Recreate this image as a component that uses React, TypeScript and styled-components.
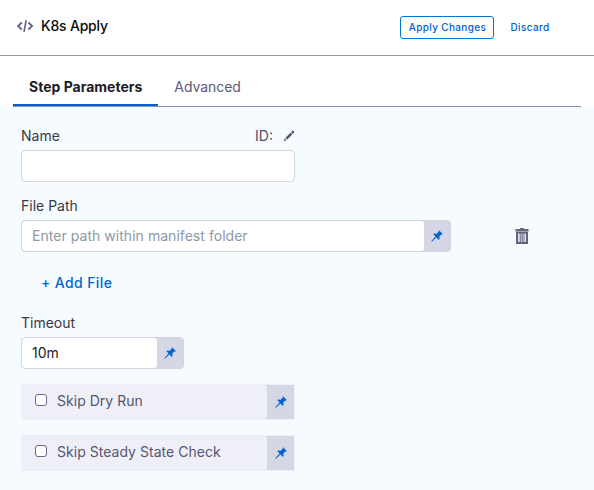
import React from "react";
import styled, { createGlobalStyle } from "styled-components";

const GlobalStyle = createGlobalStyle`
  *, *::before, *::after { box-sizing: border-box; }
  body {
    margin: 0;
    background: #f6fbff;
    font-family: Inter, "Liberation Sans", sans-serif;
    font-size: 14px;
    color: #383946;
  }
  button, input { font: inherit; }
`;

const Panel = styled.div`
  width: 594px;
  height: 490px;
  overflow: hidden;
  background: #f6fbff;
`;

const Header = styled.header`
  display: flex;
  align-items: center;
  height: 56px;
  padding: 0 36px 0 17px;
  background: #fff;
  border-bottom: 1px solid #9293ab;
`;

const Title = styled.h1`
  flex: 1;
  margin: 0 0 3px 7px;
  font-size: 14px;
  line-height: 20px;
  font-weight: 450;
  letter-spacing: -0.2px;
  color: #0b0b0d;
`;

const CodeSvg = styled.svg`
  margin-bottom: 4px;
`;

const HeaderButton = styled.button<{ $outlined?: boolean }>`
  width: ${(p) => (p.$outlined ? 94 : 57)}px;
  height: 23px;
  padding: 0 0 0 1px;
  border: 1px solid ${(p) => (p.$outlined ? "#0278d5" : "transparent")};
  border-radius: 3px;
  background: #fff;
  color: #0061cd;
  font-size: 10px;
  font-weight: 500;
  letter-spacing: 0.35px;
  white-space: nowrap;
`;

const HeaderActions = styled.div`
  display: flex;
  gap: 7px;
  margin-bottom: 1px;
`;

const TabsBar = styled.div`
  height: 51px;
  padding: 10px 13px 0;
  background: #fff;
`;

const TabList = styled.div`
  display: flex;
  height: 41px;
  border-bottom: 1px solid #9293ab;
`;

const Tab = styled.div<{ $active?: boolean }>`
  height: 40px;
  padding: 0 16px;
  line-height: 42px;
  white-space: nowrap;
  font-weight: ${(p) => (p.$active ? 700 : 400)};
  color: ${(p) => (p.$active ? "#1c1c28" : "#5b5a78")};
  letter-spacing: ${(p) => (p.$active ? "0" : "-0.05px")};
  border-bottom: 2px solid ${(p) => (p.$active ? "#0a5fc8" : "transparent")};
`;

const Form = styled.form`
  display: flex;
  flex-direction: column;
  padding: 19px 21px 0;
`;

const Field = styled.div<{ $width: number; $gap?: number }>`
  width: ${(p) => p.$width}px;
  margin-bottom: ${(p) => p.$gap ?? 0}px;
`;

const LabelRow = styled.div`
  display: flex;
  align-items: center;
  height: 20px;
  margin-bottom: 4px;
  line-height: 20px;
`;

const Label = styled.label`
  flex: 1;
`;

const Identifier = styled.span`
  margin-right: 10px;
  color: #4f5162;
`;

const InputGroup = styled.div`
  display: flex;
  height: 32px;
  border: 1px solid #d3d5e2;
  border-radius: 4px;
  background: #d5d7e4;
  overflow: hidden;
`;

const TextInput = styled.input`
  flex: 1;
  min-width: 0;
  padding: 0 10px 2px;
  border: 0;
  border-radius: 3px;
  outline: 0;
  background: #fff;
  color: #1c1c28;
  letter-spacing: 0.04px;
  &::placeholder { color: #8a9aa6; opacity: 1; }
`;

const PinCell = styled.span<{ $wide?: boolean }>`
  display: flex;
  align-items: center;
  justify-content: center;
  width: ${(p) => (p.$wide ? 27 : 26)}px;
`;

const FileRow = styled.div`
  display: flex;
  align-items: flex-end;
  gap: 64px;
`;

const TrashSvg = styled.svg`
  margin-bottom: 8px;
`;

const AddButton = styled.button`
  align-self: flex-start;
  height: 20px;
  margin: 21px 0 20px 20px;
  padding: 0;
  border: 0;
  background: none;
  color: #0066d0;
  font-weight: 480;
  letter-spacing: 0.38px;
  line-height: 20px;
`;

const CheckRow = styled.div`
  display: flex;
  width: 274px;
  height: 36px;
  margin-bottom: 15px;
  border: 1px solid #efeff8;
  background: #d5d7e4;
`;

const CheckLabel = styled.label`
  display: flex;
  flex: 1;
  align-items: center;
  gap: 10px;
  padding: 0 0 3px 13px;
  border-radius: 0 3px 3px 0;
  background: #efeff8;
  color: #555670;
  letter-spacing: 0.03px;
`;

const CheckBox = styled.input`
  appearance: none;
  width: 12px;
  height: 12px;
  margin: 0 0 1px;
  border: 1px solid #66668a;
  border-radius: 3px;
  background: #fff;
`;

const PinIcon = () => (
  <svg width="12" height="12" viewBox="0 0 12 12" fill="#0563d2">
    <path d="M8 .2 11.8 4c-.4.6-1 .6-1.6.4L8.2 6.8c.6 1.2.4 2.4-.3 3.1L5.4 7.4.9 11.8.2 11.2 4.6 6.6 2.1 4.1c.8-.7 2.1-.8 3.2-.2l2.4-2.1C7.4 1.2 7.5.6 8 .2z" />
  </svg>
);

const CodeIcon = () => (
  <CodeSvg width="17" height="14" viewBox="0 0 17 14" fill="none" stroke="#66668a" strokeWidth="2">
    <path d="M4.8 3.4 1.2 7l3.6 3.6M11.4 3.4 15 7l-3.6 3.6" />
    <path d="M9.2 1.2 7 12.8" strokeWidth="1.7" />
  </CodeSvg>
);

const PencilIcon = () => (
  <svg width="12" height="12" viewBox="0 0 16 16" fill="#55566f">
    <path d="M3.25 10.26l2.47 2.47 6.69-6.69-2.46-2.48-6.7 6.7zM.99 14.99l3.86-1.39-2.46-2.44L.99 14.99zm12.25-14c-.48 0-.92.2-1.24.51l-1.44 1.44 2.47 2.47 1.44-1.44c.32-.32.51-.75.51-1.24.01-.95-.77-1.74-1.74-1.74z" />
  </svg>
);

const TrashIcon = () => (
  <TrashSvg width="14" height="16" viewBox="0 0 14 16">
    <path d="M5 0h4v1h4.5v2H.5V1H5z" fill="#68687f" />
    <path d="M.5 3h13v1H.5z" fill="#9fa0b2" />
    <path d="M1 4h12v12H1z" fill="#626279" />
    <path d="M3 5.5h1.7V14H3zM5.7 5.5h.9V14h-.9zM7.6 5.5h.9V14h-.9zM9.4 5.5H11V14H9.4z" fill="#e4e8f2" />
  </TrashSvg>
);

const checks = ["Skip Dry Run", "Skip Steady State Check"];

export default function App() {
  return (
    <Panel>
      <GlobalStyle />
      <Header>
        <CodeIcon />
        <Title>K8s Apply</Title>
        <HeaderActions>
          <HeaderButton $outlined>Apply Changes</HeaderButton>
          <HeaderButton>Discard</HeaderButton>
        </HeaderActions>
      </Header>
      <TabsBar>
        <TabList>
          <Tab $active>Step Parameters</Tab>
          <Tab>Advanced</Tab>
        </TabList>
      </TabsBar>
      <Form>
        <Field $width={274} $gap={14}>
          <LabelRow>
            <Label htmlFor="name">Name</Label>
            <Identifier>ID:</Identifier>
            <PencilIcon />
          </LabelRow>
          <InputGroup>
            <TextInput id="name" />
          </InputGroup>
        </Field>
        <FileRow>
          <Field $width={430}>
            <LabelRow>
              <Label htmlFor="path">File Path</Label>
            </LabelRow>
            <InputGroup>
              <TextInput id="path" placeholder="Enter path within manifest folder" />
              <PinCell><PinIcon /></PinCell>
            </InputGroup>
          </Field>
          <TrashIcon />
        </FileRow>
        <AddButton type="button">+ Add File</AddButton>
        <Field $width={163} $gap={15}>
          <LabelRow>
            <Label htmlFor="timeout">Timeout</Label>
          </LabelRow>
          <InputGroup>
            <TextInput id="timeout" defaultValue="10m" />
            <PinCell><PinIcon /></PinCell>
          </InputGroup>
        </Field>
        {checks.map((text) => (
          <CheckRow key={text}>
            <CheckLabel>
              <CheckBox type="checkbox" />
              {text}
            </CheckLabel>
            <PinCell $wide><PinIcon /></PinCell>
          </CheckRow>
        ))}
      </Form>
    </Panel>
  );
}
